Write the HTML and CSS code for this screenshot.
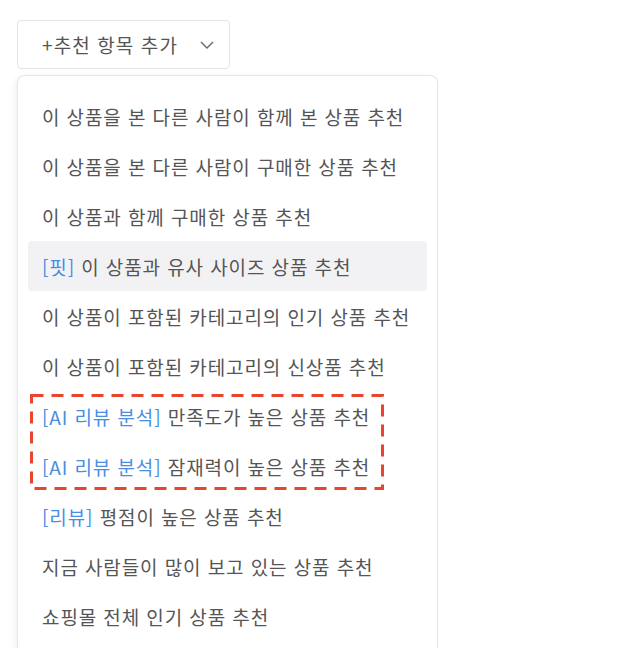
FILE: index.html
```html
<!DOCTYPE html>
<html lang="ko">
<head>
<meta charset="utf-8">
<link rel="stylesheet" href="styles.css">
</head>
<body>
<div class="page">
  <button class="add-btn" type="button">
    <span class="add-label">+추천 항목 추가</span>
    <svg class="chev" width="14" height="8" viewBox="0 0 14 8"><path d="M1 1 L7 7 L13 1" fill="none" stroke="#666" stroke-width="1.4"/></svg>
  </button>
  <div class="menu">
    <div class="item">이 상품을 본 다른 사람이 함께 본 상품 추천</div>
    <div class="item">이 상품을 본 다른 사람이 구매한 상품 추천</div>
    <div class="item">이 상품과 함께 구매한 상품 추천</div>
    <div class="item active"><span class="tag">[핏]</span> 이 상품과 유사 사이즈 상품 추천</div>
    <div class="item">이 상품이 포함된 카테고리의 인기 상품 추천</div>
    <div class="item">이 상품이 포함된 카테고리의 신상품 추천</div>
    <div class="group">
      <div class="item"><span class="tag">[AI 리뷰 분석]</span> 만족도가 높은 상품 추천</div>
      <div class="item"><span class="tag">[AI 리뷰 분석]</span> 잠재력이 높은 상품 추천</div>
      <svg class="highlight" width="354" height="96" viewBox="0 0 354 96"><rect x="1.5" y="1.5" width="351" height="93" fill="none" stroke="#e8442e" stroke-width="3" stroke-dasharray="12 8"/></svg>
    </div>
    <div class="item"><span class="tag">[리뷰]</span> 평점이 높은 상품 추천</div>
    <div class="item">지금 사람들이 많이 보고 있는 상품 추천</div>
    <div class="item">쇼핑몰 전체 인기 상품 추천</div>
  </div>
</div>
</body>
</html>
```

FILE: styles.css
```css
html, body {
  margin: 0;
  padding: 0;
  background: #ffffff;
  overflow: hidden;
  height: 648px;
}
body {
  font-family: "Noto Sans CJK KR", "Noto Sans", sans-serif;
  color: #555555;
}
.page {
  padding: 20px 0 0 17px;
  display: flex;
  flex-direction: column;
  align-items: flex-start;
  gap: 6px;
  height: 648px;
  box-sizing: border-box;
}
.add-btn {
  width: 213px;
  height: 49px;
  flex: none;
  box-sizing: border-box;
  border: 1px solid #e4e4e4;
  border-radius: 4px;
  background: #fff;
  display: flex;
  align-items: center;
  padding: 0 0 0 24px;
  gap: 22px;
  font-family: inherit;
  font-size: 19px;
  color: #555555;
  cursor: pointer;
}
.add-label {
  line-height: 1;
  letter-spacing: 1.1px;
}
.chev {
  display: block;
  margin-top: 1px;
}
.menu {
  width: 421px;
  box-sizing: border-box;
  border: 1px solid #e6e6e6;
  border-bottom: none;
  border-radius: 8px 8px 0 0;
  background: #fff;
  padding: 15px 10px 0 10px;
  box-shadow: -2px 2px 6px rgba(0,0,0,0.06);
  flex: 1;
  overflow: hidden;
}
.item {
  height: 50px;
  display: flex;
  align-items: center;
  padding-left: 14px;
  font-size: 19px;
  letter-spacing: 0.9px;
  border-radius: 4px;
  white-space: pre;
}
.item.active {
  background: #f2f2f4;
}
.tag {
  color: #4a8ee2;
}
.group {
  position: relative;
}
.highlight {
  position: absolute;
  left: 2px;
  top: 3px;
  pointer-events: none;
}
```
